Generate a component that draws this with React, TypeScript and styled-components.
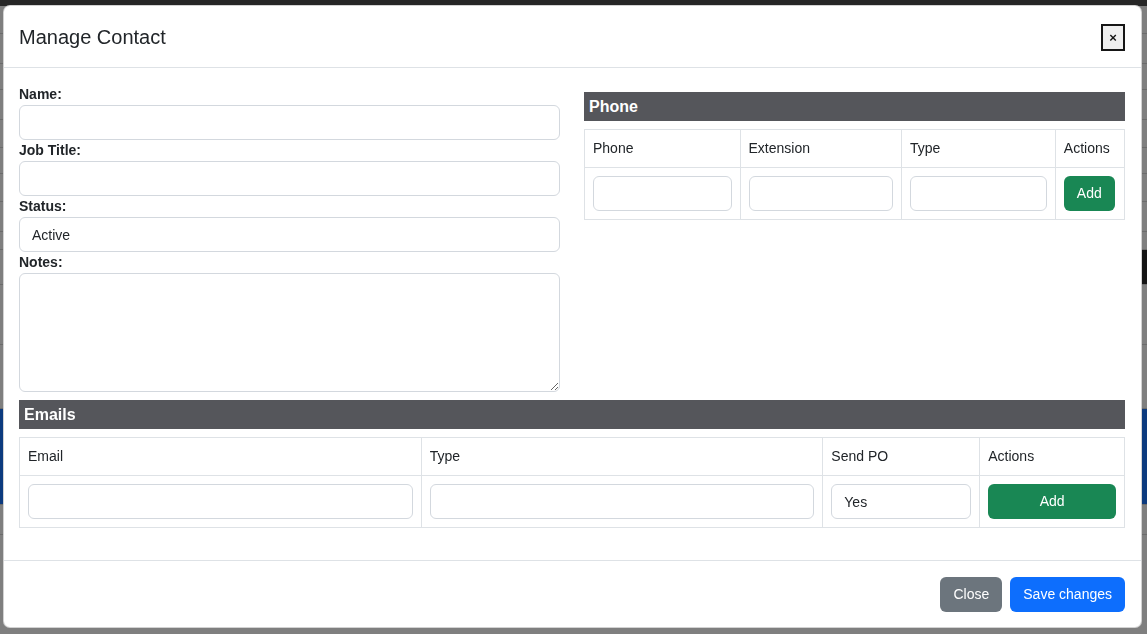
import React from "react";
import styled, { createGlobalStyle } from "styled-components";

const GlobalStyle = createGlobalStyle`
  html, body {
    margin: 0;
    padding: 0;
  }
  body {
    font-family: "Liberation Sans", Arial, sans-serif;
    font-size: 14px;
    color: #212529;
  }
  * {
    box-sizing: border-box;
  }
`;

/* page underneath the dimmed backdrop */
const Page = styled.div`
  height: 634px;
  overflow: hidden;
  background: #7f7f7f;
  display: flex;
  flex-direction: column;
`;

const PageHeader = styled.div`
  height: 6px;
  flex: none;
  background: #262626;
`;

const PageRow = styled.div<{ $h: number; $bg?: string }>`
  height: ${(p) => p.$h}px;
  flex: none;
  background: ${(p) => p.$bg ?? "#7f7f7f"};
  border-bottom: 1px solid #6b6b6b;
  display: flex;
  justify-content: flex-end;
`;

const PageButton = styled.div`
  width: 60px;
  height: 100%;
  background: #141414;
`;

/* modal */
const Overlay = styled.div`
  position: fixed;
  inset: 0;
  display: flex;
  justify-content: flex-start;
  align-items: flex-start;
  padding: 5px 0 0 3px;
`;

const Dialog = styled.div`
  width: 1139px;
  flex: none;
  background: #fff;
  border: 1px solid rgba(0, 0, 0, 0.175);
  border-radius: 7px;
  display: flex;
  flex-direction: column;
`;

const Header = styled.div`
  display: flex;
  align-items: center;
  justify-content: space-between;
  padding: 16px 16px 15px 15px;
  border-bottom: 1px solid #dee2e6;
`;

const Title = styled.h5`
  margin: 0;
  font-size: 20px;
  font-weight: 400;
  line-height: 30px;
  color: #212529;
`;

const CloseX = styled.button`
  width: 24px;
  height: 27px;
  padding: 0;
  background: #efefef;
  border: 2px solid #161616;
  border-radius: 0;
  font-family: "Liberation Sans", Arial, sans-serif;
  font-size: 13px;
  font-weight: 700;
  line-height: 1;
  color: #111;
  cursor: pointer;
`;

const Body = styled.div`
  padding: 16px 16px 16px 15px;
`;

const Columns = styled.div`
  display: grid;
  grid-template-columns: 1fr 1fr;
  column-gap: 24px;
`;

const Column = styled.div`
  display: flex;
  flex-direction: column;
`;

const Label = styled.label`
  display: block;
  font-weight: 700;
  line-height: 21px;
`;

const Input = styled.input`
  display: block;
  width: 100%;
  height: 35px;
  padding: 6px 12px;
  border: 1px solid #d3d8de;
  border-radius: 6px;
  font-family: inherit;
  font-size: 14px;
  color: #212529;
  background: #fff;
`;

const TextArea = styled.textarea`
  display: block;
  width: 100%;
  height: 119px;
  padding: 6px 12px;
  border: 1px solid #d3d8de;
  border-radius: 6px;
  font-family: inherit;
  font-size: 14px;
  resize: vertical;
`;

const SectionBar = styled.div`
  margin: 8px 0;
  height: 29px;
  padding: 0 5px;
  background: #55565b;
  color: #fff;
  font-size: 16px;
  font-weight: 700;
  line-height: 29px;
`;

const Table = styled.table<{ $mb?: number }>`
  width: 100%;
  border-collapse: collapse;
  table-layout: fixed;
  margin-bottom: ${(p) => p.$mb ?? 0}px;
`;

const Th = styled.th<{ $w: string }>`
  width: ${(p) => p.$w};
  padding: 8px;
  border: 1px solid #dee2e6;
  text-align: left;
  font-weight: 400;
  line-height: 21px;
`;

const Td = styled.td`
  padding: 8px;
  border: 1px solid #dee2e6;
`;

const Btn = styled.button<{ $variant: "success" | "secondary" | "primary"; $block?: boolean }>`
  display: ${(p) => (p.$block ? "block" : "inline-block")};
  width: ${(p) => (p.$block ? "100%" : "auto")};
  height: 35px;
  padding: 6px 12px;
  border: 1px solid transparent;
  border-radius: 6px;
  font-family: inherit;
  font-size: 14px;
  line-height: 21px;
  color: #fff;
  cursor: pointer;
  background: ${(p) =>
    p.$variant === "success" ? "#198754" : p.$variant === "secondary" ? "#6c757d" : "#0d6efd"};
`;

const Footer = styled.div`
  display: flex;
  justify-content: flex-end;
  gap: 8px;
  padding: 16px 16px 15px;
  border-top: 1px solid #dee2e6;
`;

const phoneCols = [
  { name: "Phone", w: "28.8%" },
  { name: "Extension", w: "29.9%" },
  { name: "Type", w: "28.5%" },
  { name: "Actions", w: "12.8%" },
];

const emailCols = [
  { name: "Email", w: "36.35%" },
  { name: "Type", w: "36.35%" },
  { name: "Send PO", w: "14.2%" },
  { name: "Actions", w: "13.1%" },
];

const backgroundRows = [28, 30, 26, 30, 28, 26, 28, 30, 18];

const App = () => {
  return (
    <>
      <GlobalStyle />
      <Page>
        <PageHeader />
        {backgroundRows.map((h, i) => (
          <PageRow key={i} $h={h} />
        ))}
        <PageRow $h={35}>
          <PageButton />
        </PageRow>
        <PageRow $h={60} />
        <PageRow $h={64} />
        <PageRow $h={96} $bg="#0c3a7e" />
        <PageRow $h={30} />
        <PageRow $h={100} />
      </Page>

      <Overlay>
        <Dialog>
          <Header>
            <Title>Manage Contact</Title>
            <CloseX type="button">×</CloseX>
          </Header>

          <Body>
            <Columns>
              <Column>
                <Label>Name:</Label>
                <Input type="text" />
                <Label>Job Title:</Label>
                <Input type="text" />
                <Label>Status:</Label>
                <Input type="text" defaultValue="Active" />
                <Label>Notes:</Label>
                <TextArea />
              </Column>

              <Column>
                <SectionBar>Phone</SectionBar>
                <Table>
                  <thead>
                    <tr>
                      {phoneCols.map((c) => (
                        <Th key={c.name} $w={c.w}>
                          {c.name}
                        </Th>
                      ))}
                    </tr>
                  </thead>
                  <tbody>
                    <tr>
                      <Td>
                        <Input type="text" />
                      </Td>
                      <Td>
                        <Input type="text" />
                      </Td>
                      <Td>
                        <Input type="text" />
                      </Td>
                      <Td>
                        <Btn $variant="success">Add</Btn>
                      </Td>
                    </tr>
                  </tbody>
                </Table>
              </Column>
            </Columns>

            <SectionBar>Emails</SectionBar>
            <Table $mb={16}>
              <thead>
                <tr>
                  {emailCols.map((c) => (
                    <Th key={c.name} $w={c.w}>
                      {c.name}
                    </Th>
                  ))}
                </tr>
              </thead>
              <tbody>
                <tr>
                  <Td>
                    <Input type="text" />
                  </Td>
                  <Td>
                    <Input type="text" />
                  </Td>
                  <Td>
                    <Input type="text" defaultValue="Yes" />
                  </Td>
                  <Td>
                    <Btn $variant="success" $block>
                      Add
                    </Btn>
                  </Td>
                </tr>
              </tbody>
            </Table>
          </Body>

          <Footer>
            <Btn $variant="secondary">Close</Btn>
            <Btn $variant="primary">Save changes</Btn>
          </Footer>
        </Dialog>
      </Overlay>
    </>
  );
};

export default App;
